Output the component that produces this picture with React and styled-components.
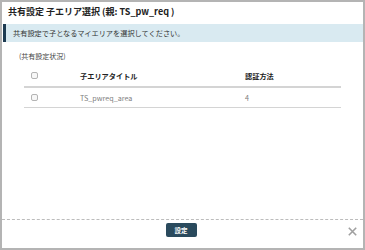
import React from 'react';
import styled, { createGlobalStyle } from 'styled-components';

const GlobalStyle = createGlobalStyle`
    html, body {
        margin: 0;
        padding: 0;
        background: #ffffff;
    }
    * {
        box-sizing: border-box;
    }
`;

const Dialog = styled.div`
    width: 365px;
    height: 250px;
    border: 2px solid #b4b4b4;
    background: #ffffff;
    display: flex;
    flex-direction: column;
    font-family: "Noto Sans CJK JP", "Noto Sans", sans-serif;
    color: #333333;
`;

const Title = styled.h1`
    margin: 0;
    padding: 4px 6px 0 6px;
    height: 22px;
    font-size: 9px;
    font-weight: 700;
    line-height: 12px;
    color: #222222;
`;

const Notice = styled.div`
    height: 18px;
    margin: 0 0 0 1px;
    border-left: 3px solid #1d3b52;
    background: #d9eaf1;
    padding-left: 7px;
    display: flex;
    align-items: center;
    font-size: 7.2px;
    color: #333333;
`;

const Body = styled.div`
    padding: 10px 0 0 17px;
`;

const StatusLabel = styled.div`
    font-size: 7px;
    line-height: 9px;
    color: #444444;
`;

const Table = styled.div`
    margin: 4px 0 0 5px;
    width: 317px;
`;

const Row = styled.div`
    display: grid;
    grid-template-columns: 56px 165px 1fr;
    align-items: center;
    height: ${props => props.head ? '23px' : '20px'};
    border-bottom: ${props => props.head ? '2px' : '1px'} solid #d4d4d4;
    font-size: 7.2px;
    font-weight: ${props => props.head ? 700 : 400};
    color: ${props => props.head ? '#222222' : '#808080'};
`;

const CheckCell = styled.div`
    padding-left: 7px;
    display: flex;
    align-items: center;
`;

const Check = styled.span`
    width: 7px;
    height: 7px;
    border: 1px solid #b4b4b4;
    border-radius: 2px;
    background: #f7f7f7;
`;

const Footer = styled.div`
    margin-top: auto;
    height: 29px;
    border-top: 1px dashed #bcbcbc;
    display: grid;
    grid-template-columns: 1fr auto 1fr;
    align-items: start;
    padding: 3px 6px 0 0;
`;

const Button = styled.button`
    grid-column: 2;
    width: 31px;
    height: 14px;
    margin-left: 3px;
    padding: 0;
    border: none;
    border-radius: 2px;
    background: #2a4a5d;
    color: #ffffff;
    font-family: "Noto Sans CJK JP", "Noto Sans", sans-serif;
    font-size: 6.5px;
    font-weight: 700;
    line-height: 14px;
`;

const Close = styled.div`
    grid-column: 3;
    justify-self: end;
    margin-top: 4px;
    width: 9px;
    height: 9px;
    display: flex;
`;

const App = () => {
    return (
        <>
            <GlobalStyle />
            <Dialog>
                <Title>共有設定 子エリア選択 (親: TS_pw_req )</Title>
                <Notice>共有設定で子となるマイエリアを選択してください。</Notice>
                <Body>
                    <StatusLabel>(共有設定状況)</StatusLabel>
                    <Table>
                        <Row head>
                            <CheckCell><Check /></CheckCell>
                            <div>子エリアタイトル</div>
                            <div>認証方法</div>
                        </Row>
                        <Row>
                            <CheckCell><Check /></CheckCell>
                            <div>TS_pwreq_area</div>
                            <div>4</div>
                        </Row>
                    </Table>
                </Body>
                <Footer>
                    <Button>設定</Button>
                    <Close>
                        <svg width="9" height="9" viewBox="0 0 9 9">
                            <path d="M0.8 0.8 L8.2 8.2 M8.2 0.8 L0.8 8.2" stroke="#a0a0a0" strokeWidth="1.6" />
                        </svg>
                    </Close>
                </Footer>
            </Dialog>
        </>
    );
};

export default App;
